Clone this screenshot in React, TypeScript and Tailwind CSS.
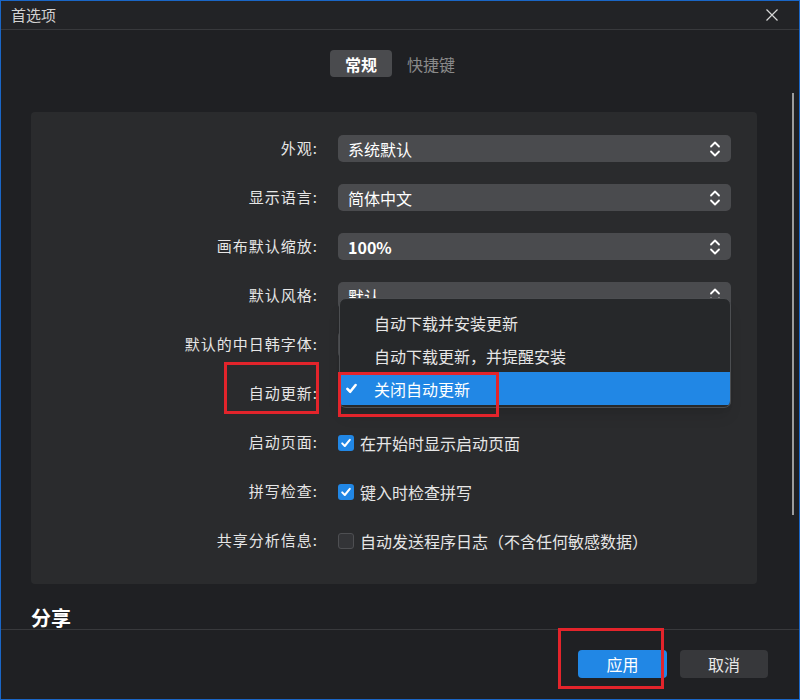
import { type ReactNode } from "react";

const rows = [
  { label: "外观", value: "系统默认" },
  { label: "显示语言", value: "简体中文" },
  { label: "画布默认缩放", value: "100%" },
  { label: "默认风格", value: "默认", menu: true },
  // the next two are hidden behind the open menu
  { label: "默认的中日韩字体", value: "" },
  { label: "自动更新", value: "" },
];

const updateOptions = ["自动下载并安装更新", "自动下载更新，并提醒安装", "关闭自动更新"];

function Chevrons() {
  return (
    <svg width="12" height="18" viewBox="0 0 12 18" fill="none" aria-hidden="true">
      <path d="M2 6.5 6 2.5 10 6.5" stroke="white" strokeWidth="1.8" strokeLinecap="round" strokeLinejoin="round" />
      <path d="M2 11.5 6 15.5 10 11.5" stroke="white" strokeWidth="1.8" strokeLinecap="round" strokeLinejoin="round" />
    </svg>
  );
}

function Check({ size = 12, weight = 2 }: { size?: number; weight?: number }) {
  return (
    <svg width={size} height={size} viewBox="0 0 12 12" fill="none" aria-hidden="true">
      <path d="M2.2 6.4 4.8 9 9.8 2.8" stroke="white" strokeWidth={weight} strokeLinecap="round" strokeLinejoin="round" />
    </svg>
  );
}

function Row({ label, children }: { label: string; children: ReactNode }) {
  return (
    <div className="flex h-[27px] items-center gap-[20px]">
      <span className="w-[287px] shrink-0 text-right text-[15px] tracking-[1px] text-[#e6e6e6]">
        {label}:
      </span>
      {children}
    </div>
  );
}

function UpdateMenu() {
  return (
    <div className="absolute left-[1px] right-0 top-[16px] z-10 overflow-hidden rounded-[7px] border border-[#4c4e51] bg-[#26282a] pt-[7px] pb-[2px] shadow-lg">
      {updateOptions.map((opt, i) => {
        const selected = i === updateOptions.length - 1;
        return (
          <div
            key={opt}
            className={`flex h-[33px] items-center text-[16px] ${selected ? "bg-[#2187e5] text-white" : "text-[#e6e6e6]"}`}
          >
            <span className="flex w-[34px] pl-[5px]">{selected && <Check size={13} weight={2.4} />}</span>
            <span>{opt}</span>
          </div>
        );
      })}
    </div>
  );
}

function Select({ value, menu }: { value: string; menu?: boolean }) {
  return (
    <div className="relative h-[27px] w-[393px]">
      <div className="flex h-full items-center justify-between rounded-[5px] bg-[#4a4b4e] pl-[10px] pr-[10px]">
        <span className={`text-[16px] text-white ${value === "100%" ? "font-semibold" : ""}`}>{value}</span>
        <Chevrons />
      </div>
      {menu && <UpdateMenu />}
    </div>
  );
}

function CheckRow({ label, text, checked }: { label: string; text: string; checked: boolean }) {
  return (
    <Row label={label}>
      <div className="flex items-center gap-[6px]">
        {checked ? (
          <span className="flex h-[16px] w-[16px] items-center justify-center rounded-[3px] bg-[#2187e5]">
            <Check />
          </span>
        ) : (
          <span className="h-[16px] w-[16px] rounded-[3px] border border-[#4e4f52] bg-[#333437]" />
        )}
        <span className="text-[16px] text-[#e6e6e6]">{text}</span>
      </div>
    </Row>
  );
}

export default function App() {
  return (
    <div className="relative flex h-[700px] w-[800px] flex-col border border-[#1a66c6] bg-[#1f2023] font-['Noto_Sans_CJK_SC',sans-serif]">
      <div className="flex h-[29px] shrink-0 items-center justify-between border-b border-[#38393c] bg-[#222326] pl-[10px] pr-[21px]">
        <span className="text-[15px] text-[#d2d2d2]">首选项</span>
        <svg width="12" height="12" viewBox="0 0 12 12" aria-hidden="true">
          <path d="M0.5 0.5 11.5 11.5M11.5 0.5 0.5 11.5" stroke="#d6d6d6" strokeWidth="1.2" />
        </svg>
      </div>

      <div className="relative h-[599px] shrink-0 overflow-hidden">
        <div className="flex justify-center pt-[20px]">
          <span className="flex h-[27px] items-center rounded-[4px] bg-[#4a4b4e] px-[15px] text-[16px] font-bold text-white">
            常规
          </span>
          <span className="flex h-[27px] items-center px-[15px] text-[16px] text-[#8a8a8a]">快捷键</span>
        </div>

        <div className="ml-[30px] mt-[35px] flex w-[726px] flex-col gap-[22px] rounded-[4px] bg-[#2a2b2d] pt-[23px] pb-[30px]">
          {rows.map((r) => (
            <Row key={r.label} label={r.label}>
              <Select value={r.value} menu={r.menu} />
            </Row>
          ))}
          <CheckRow label="启动页面" text="在开始时显示启动页面" checked />
          <CheckRow label="拼写检查" text="键入时检查拼写" checked />
          <CheckRow label="共享分析信息" text="自动发送程序日志（不含任何敏感数据）" checked={false} />
        </div>

        <h2 className="ml-[30px] mt-[20px] text-[20px] font-bold leading-[28px] text-white">分享</h2>

        <div className="absolute right-[5px] top-[63px] h-[422px] w-[2px] bg-[#9c9c9c]" />
      </div>

      <div className="flex flex-1 items-start justify-end gap-[13px] border-t border-[#38393c] pt-[20px] pr-[31px]">
        <button className="h-[28px] w-[89px] rounded-[4px] bg-[#2187e5] text-[16px] text-white">应用</button>
        <button className="h-[28px] w-[88px] rounded-[4px] bg-[#37383b] text-[16px] text-[#e8e8e8]">取消</button>
      </div>

      {/* red annotation boxes */}
      <div className="pointer-events-none absolute left-[223px] top-[361px] z-20 h-[52px] w-[95px] border-[3px] border-[#e3242b]" />
      <div className="pointer-events-none absolute left-[337px] top-[371px] z-20 h-[45px] w-[161px] border-[3px] border-[#e3242b]" />
      <div className="pointer-events-none absolute left-[557px] top-[627px] z-20 h-[61px] w-[106px] border-[3px] border-[#e3242b]" />
    </div>
  );
}
